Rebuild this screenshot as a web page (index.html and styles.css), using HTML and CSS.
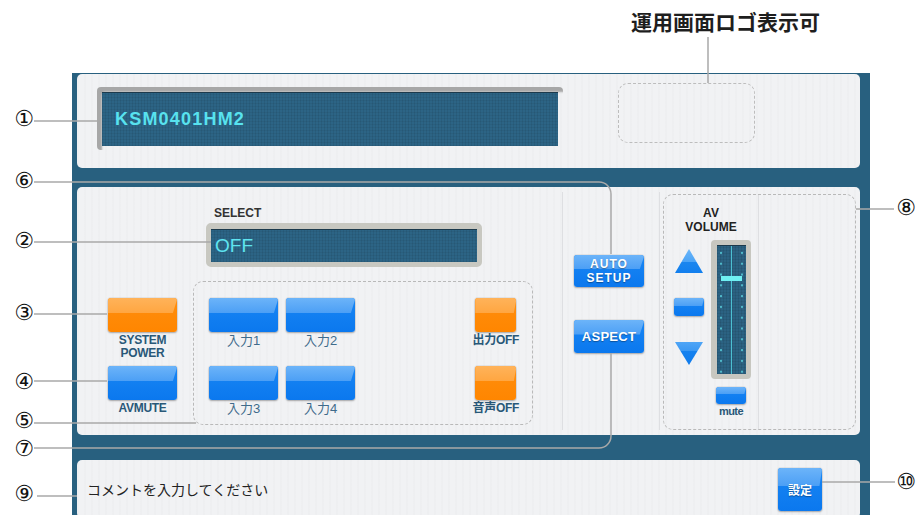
FILE: index.html
```html
<!DOCTYPE html>
<html lang="ja">
<head>
    <meta charset="UTF-8">
    <title>運用画面</title>
    <link rel="stylesheet" href="styles.css">
</head>
<body>
    <div class="caption">運用画面ロゴ表示可</div>

    <div class="device">
        <div class="panel panel-top">
            <div class="lcd-main"><div class="lcd-screen">KSM0401HM2</div></div>
            <div class="logo-slot"></div>
        </div>

        <div class="panel panel-main">
            <div class="sec sec-input">
                <div class="select-block">
                    <div class="select-label">SELECT</div>
                    <div class="lcd-select"><div class="lcd-screen lcd-small">OFF</div></div>
                </div>
                <div class="key-area">
                    <div class="key-col key-col-main">
                        <div class="key">
                            <div class="btn btn-orange btn-wide"></div>
                            <div class="key-label bold">SYSTEM<br>POWER</div>
                        </div>
                        <div class="key">
                            <div class="btn btn-wide"></div>
                            <div class="key-label bold">AVMUTE</div>
                        </div>
                    </div>
                    <div class="input-group">
                        <div class="input-grid">
                            <div class="key"><div class="btn btn-wide"></div><div class="key-label">入力1</div></div>
                            <div class="key"><div class="btn btn-wide"></div><div class="key-label">入力2</div></div>
                            <div class="key"><div class="btn btn-wide"></div><div class="key-label">入力3</div></div>
                            <div class="key"><div class="btn btn-wide"></div><div class="key-label">入力4</div></div>
                        </div>
                        <div class="key-col">
                            <div class="key"><div class="btn btn-orange btn-small"></div><div class="key-label bold">出力OFF</div></div>
                            <div class="key"><div class="btn btn-orange btn-small"></div><div class="key-label bold">音声OFF</div></div>
                        </div>
                    </div>
                </div>
            </div>

            <div class="sec sec-mid">
                <div class="btn btn-text btn-auto"><span>AUTO<br>SETUP</span></div>
                <div class="btn btn-text btn-aspect"><span>ASPECT</span></div>
            </div>

            <div class="sec-vol">
                <div class="vol-box">
                    <div class="vol-main">
                        <div class="vol-title">AV<br>VOLUME</div>
                        <div class="vol-body">
                            <div class="vol-arrows">
                                <svg class="arrow-up" width="28" height="24" viewBox="0 0 28 24">
                                    <defs>
                                        <linearGradient id="gUp" x1="0" y1="0" x2="0" y2="1">
                                            <stop offset="0" stop-color="#6ab6f9"/>
                                            <stop offset="0.55" stop-color="#4ba3f6"/>
                                            <stop offset="0.56" stop-color="#1b86ef"/>
                                            <stop offset="1" stop-color="#127fee"/>
                                        </linearGradient>
                                    </defs>
                                    <polygon points="14,0 28,24 0,24" fill="url(#gUp)"/>
                                </svg>
                                <div class="btn btn-minus"></div>
                                <svg class="arrow-down" width="28" height="23" viewBox="0 0 28 23">
                                    <defs>
                                        <linearGradient id="gDown" x1="0" y1="0" x2="0" y2="1">
                                            <stop offset="0" stop-color="#4fa5f6"/>
                                            <stop offset="0.4" stop-color="#3a98f3"/>
                                            <stop offset="0.41" stop-color="#1682ef"/>
                                            <stop offset="1" stop-color="#0f7bec"/>
                                        </linearGradient>
                                    </defs>
                                    <polygon points="0,0 28,0 14,23" fill="url(#gDown)"/>
                                </svg>
                            </div>
                            <div class="vol-slider-col">
                                <div class="slider">
                                    <div class="slider-track"><div class="slider-knob"></div></div>
                                </div>
                                <div class="btn btn-mute"></div>
                                <div class="mute-label">mute</div>
                            </div>
                        </div>
                    </div>
                </div>
            </div>
        </div>

        <div class="panel panel-comment">
            <span class="comment">コメントを入力してください</span>
            <div class="btn btn-text btn-set"><span>設定</span></div>
        </div>
    </div>

    <!-- callout lines and numbers -->
    <svg class="leaders" width="918" height="515" viewBox="0 0 918 515">
        <g fill="none" stroke="#a9a9a9" stroke-width="1.5">
            <path d="M708 37V83"/>
            <path d="M34 121H97"/>
            <path d="M34 182H599a12 12 0 0 1 12 12V254"/>
            <path d="M34 242H211"/>
            <path d="M34 314H107"/>
            <path d="M34 381H107"/>
            <path d="M34 423H196"/>
            <path d="M34 448H599a12 12 0 0 0 12 -12V353"/>
            <path d="M37 496H77"/>
            <path d="M856 209H894"/>
            <path d="M822 482H895"/>
        </g>
    </svg>
    <span class="num n1">①</span>
    <span class="num n6">⑥</span>
    <span class="num n2">②</span>
    <span class="num n3">③</span>
    <span class="num n4">④</span>
    <span class="num n5">⑤</span>
    <span class="num n7">⑦</span>
    <span class="num n9">⑨</span>
    <span class="num n8">⑧</span>
    <span class="num n10">⑩</span>
</body>
</html>
```

FILE: styles.css
```css
body {
    margin: 0;
    width: 918px;
    height: 515px;
    overflow: hidden;
    position: relative;
    background: #fff;
    font-family: "Liberation Sans", "Noto Sans CJK JP", sans-serif;
    color: #222;
}

.caption {
    height: 73px;
    box-sizing: border-box;
    padding: 6px 0 0 631px;
    font-family: "Noto Sans CJK JP", sans-serif;
    font-size: 21px;
    font-weight: bold;
    line-height: 30px;
    color: #1e1e1e;
}

.device {
    margin-left: 72px;
    width: 798px;
    height: 442px;
    box-sizing: border-box;
    padding: 1px 10px 0 5px;
    background: #28607f;
    overflow: hidden;
}

.panel {
    background-color: #f1f2f4;
    background-image: repeating-linear-gradient(90deg, rgba(0,0,0,0.012) 0 2px, transparent 2px 7px);
    border-radius: 5px;
}

/* top panel */
.panel-top {
    height: 94px;
    box-sizing: border-box;
    padding: 13px 20px;
    display: flex;
    align-items: flex-start;
}

.lcd-main {
    width: 466px;
    height: 63px;
    box-sizing: border-box;
    padding: 5px 5px 4px 5px;
    border-radius: 4px;
    box-shadow: inset 5px 5px 2px #a7a7a7;
}

.lcd-screen {
    height: 100%;
    box-sizing: border-box;
    display: flex;
    align-items: center;
    padding-left: 13px;
    background-color: #2c6485;
    background-image:
        repeating-linear-gradient(90deg, rgba(0,0,0,0.07) 0 1px, transparent 1px 3px),
        repeating-linear-gradient(0deg, rgba(0,0,0,0.05) 0 1px, transparent 1px 3px);
    border-top: 1px solid #1c3a4c;
    color: #58e2ef;
    font-size: 18px;
    font-weight: bold;
    letter-spacing: 1.2px;
}

.logo-slot {
    width: 137px;
    height: 60px;
    box-sizing: border-box;
    margin: -4px 0 0 55px;
    border: 1px dashed #bdbdbd;
    border-radius: 10px;
}

/* main panel */
.panel-main {
    margin-top: 19px;
    height: 248px;
    box-sizing: border-box;
    padding: 5px 0;
    display: flex;
}

.sec {
    box-sizing: border-box;
    border-right: 1px solid #dedfe2;
}

.sec-input {
    width: 486px;
    padding-top: 14px;
}

.select-block {
    padding-left: 129px;
}

.select-label {
    margin-left: 8px;
    font-size: 12px;
    font-weight: bold;
    line-height: 14px;
    color: #333;
}

.lcd-select {
    margin-top: 3px;
    width: 276px;
    height: 44px;
    box-sizing: border-box;
    border: 5px solid #c8c8c1;
    border-top-width: 6px;
    border-radius: 5px;
}

.lcd-small {
    padding-left: 4px;
    font-size: 19px;
    font-weight: normal;
    letter-spacing: 0;
    color: #5fe4f0;
}

.key-area {
    margin-top: 14px;
    padding-left: 31px;
    display: flex;
    align-items: flex-start;
}

.key-col-main {
    width: 69px;
    padding-top: 17px;
    margin-right: 16px;
}

.key {
    height: 68px;
    display: flex;
    flex-direction: column;
    align-items: center;
}

.key-label {
    margin-top: 2px;
    font-size: 13px;
    line-height: 13px;
    color: #3f6b8b;
    text-align: center;
    white-space: nowrap;
}

.key-label.bold {
    font-size: 12px;
    font-weight: bold;
    color: #295878;
    letter-spacing: -0.3px;
}

.input-group {
    width: 340px;
    height: 144px;
    box-sizing: border-box;
    padding: 16px 13px 0 15px;
    border: 1px dashed #b9b9b9;
    border-radius: 10px;
    display: flex;
    justify-content: space-between;
}

.input-grid {
    display: grid;
    grid-template-columns: 69px 69px;
    grid-auto-rows: 68px;
    column-gap: 8px;
}

.input-grid .key {
    height: auto;
}

/* glossy buttons */
.btn {
    position: relative;
    border-radius: 3px;
    background: linear-gradient(#1986f4, #0b78ee);
    box-shadow: 0 0 0 1px rgba(0,0,0,0.05), 0 1px 2px rgba(0,0,0,0.28);
    overflow: hidden;
}

.btn::before {
    content: "";
    position: absolute;
    left: 0;
    top: 0;
    right: 0;
    height: 44%;
    background: linear-gradient(#6cb4f9, #4c9ff5);
    clip-path: polygon(0 0, 100% 0, 100% 12%, 94% 100%, 0 100%);
}

.btn-orange {
    background: linear-gradient(#ff8e0e, #ff8600);
}

.btn-orange::before {
    background: linear-gradient(#ffb35a, #ffa641);
}

.btn-wide {
    width: 69px;
    height: 34px;
}

.btn-small {
    width: 41px;
    height: 34px;
}

.btn-text {
    display: flex;
    align-items: center;
    justify-content: center;
    color: #fff;
    font-weight: bold;
    text-align: center;
    text-shadow: 0 1px 1px rgba(0,0,0,0.35);
}

.btn-text span {
    position: relative;
}

/* middle column */
.sec-mid {
    width: 97px;
    padding: 63px 0 0 11px;
}

.btn-auto {
    width: 70px;
    height: 32px;
    font-size: 12px;
    line-height: 14px;
    letter-spacing: 1px;
}

.btn-aspect {
    margin-top: 33px;
    width: 70px;
    height: 33px;
    font-size: 13px;
    letter-spacing: 0.3px;
}

/* volume */
.sec-vol {
    flex: 1;
    padding: 2px 4px 0 3px;
}

.vol-box {
    height: 236px;
    box-sizing: border-box;
    border: 1px dashed #b9b9b9;
    border-radius: 10px;
    display: flex;
}

.vol-main {
    width: 95px;
    box-sizing: border-box;
    border-right: 1px solid #dedfe2;
    padding-top: 11px;
}

.vol-title {
    font-size: 12px;
    font-weight: bold;
    line-height: 14px;
    text-align: center;
    color: #222;
}

.vol-body {
    margin-top: 6px;
    padding-left: 10px;
    display: flex;
    gap: 7px;
}

.vol-arrows {
    width: 30px;
    display: flex;
    flex-direction: column;
    align-items: center;
}

.arrow-up {
    margin-top: 9px;
}

.btn-minus {
    margin-top: 25px;
    width: 30px;
    height: 18px;
}

.arrow-down {
    margin-top: 26px;
}

.vol-slider-col {
    width: 40px;
    display: flex;
    flex-direction: column;
    align-items: center;
}

.slider {
    width: 40px;
    height: 139px;
    box-sizing: border-box;
    border: 5px solid #c7c7c0;
    border-left-width: 6px;
    border-bottom-width: 6px;
    border-radius: 4px;
}

.slider-track {
    position: relative;
    height: 100%;
    background-color: #2b6282;
    background-image:
        linear-gradient(90deg, transparent 14px, #4cc0d2 14px 15px, transparent 15px),
        radial-gradient(circle at 4px 6px, #4fb8c9 0 1px, transparent 1.5px),
        radial-gradient(circle at 25px 6px, #4fb8c9 0 1px, transparent 1.5px),
        repeating-linear-gradient(90deg, rgba(0,0,0,0.08) 0 1px, transparent 1px 3px),
        repeating-linear-gradient(0deg, rgba(0,0,0,0.06) 0 1px, transparent 1px 3px);
    background-size: auto, 29px 10.8px, 29px 10.8px, auto, auto;
    background-position: 0 0, 0 1px, 0 1px, 0 0, 0 0;
    border-top: 1px solid #1c3a4c;
}

.slider-knob {
    position: absolute;
    left: 4px;
    top: 30px;
    width: 21px;
    height: 5px;
    background: #6ff0f2;
}

.btn-mute {
    margin-top: 8px;
    width: 30px;
    height: 17px;
}

.mute-label {
    margin-top: 1px;
    font-size: 11px;
    font-weight: bold;
    line-height: 12px;
    letter-spacing: -0.6px;
    color: #295878;
}

/* comment bar */
.panel-comment {
    margin-top: 25px;
    height: 58px;
    box-sizing: border-box;
    padding: 0 38px 0 10px;
    display: flex;
    align-items: center;
    justify-content: space-between;
}

.comment {
    font-family: "Noto Sans CJK JP", sans-serif;
    font-size: 14px;
    color: #222;
}

.btn-set {
    width: 44px;
    height: 43px;
    font-family: "Noto Sans CJK JP", sans-serif;
    font-size: 12px;
}

/* callouts */
.leaders {
    position: absolute;
    left: 0;
    top: 0;
    pointer-events: none;
}

.num {
    position: absolute;
    width: 24px;
    font-family: "DejaVu Sans", sans-serif;
    font-size: 22px;
    line-height: 22px;
    text-align: center;
    color: #111;
}

.n1 { left: 12px; top: 108px; }
.n6 { left: 12px; top: 170px; }
.n2 { left: 12px; top: 230px; }
.n3 { left: 12px; top: 302px; }
.n4 { left: 12px; top: 371px; }
.n5 { left: 12px; top: 410px; }
.n7 { left: 12px; top: 438px; }
.n9 { left: 12px; top: 483px; }
.n8 { left: 894px; top: 197px; }
.n10 { left: 894px; top: 471px; }
```
